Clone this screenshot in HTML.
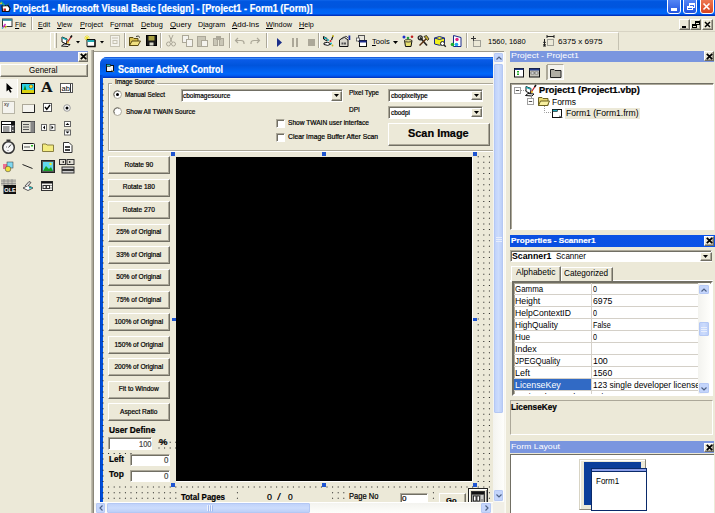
<!DOCTYPE html><html><head><meta charset="utf-8"><style>
html,body{margin:0;padding:0;}
body{width:715px;height:513px;overflow:hidden;position:relative;background:#ECE9D8;font-family:"Liberation Sans",sans-serif;}
div{box-sizing:border-box;-webkit-text-stroke:0.2px currentColor;}
svg{position:absolute;overflow:visible;}
</style></head><body>
<div style="position:absolute;left:0px;top:0px;width:715px;height:16px;background:linear-gradient(#1066EA 0%,#0056E0 10%,#0055DE 45%,#0062F2 60%,#0066F8 86%,#0040D0 93%,#0028B0 100%);"></div>
<div style="position:absolute;left:13px;top:0.50px;height:15px;line-height:15px;font-size:10px;font-weight:bold;color:#fff;white-space:nowrap;transform:scaleX(0.9204);transform-origin:0 0;">Project1 - Microsoft Visual Basic [design] - [Project1 - Form1 (Form)]</div>
<svg style="left:0px;top:1px" width="12" height="12" viewBox="0 0 12 12"><path d="M2 5 L8 4.5 L10 7.5 L9 10.5 L2.5 10.5z" fill="#fff" stroke="#111" stroke-width="1.2"/><path d="M1 0.5 L4.5 4.5" stroke="#1BA890" stroke-width="1.6"/><circle cx="1" cy="2.5" r="1" fill="#E8D020"/><rect x="3.5" y="7.5" width="2.5" height="2.5" fill="#C02020"/><path d="M6 4.5 L9 2.5" stroke="#1a6a80" stroke-width="1.2"/></svg>
<div style="position:absolute;left:667px;top:-3px;width:14px;height:16.5px;background:linear-gradient(#5C8DF8,#2254E0);border:1px solid #fff;border-radius:3px;"></div>
<div style="position:absolute;left:683px;top:-3px;width:14px;height:16.5px;background:linear-gradient(#5C8DF8,#2254E0);border:1px solid #fff;border-radius:3px;"></div>
<div style="position:absolute;left:699.5px;top:-3px;width:14px;height:16.5px;background:linear-gradient(#F0805A,#D9431E);border:1px solid #fff;border-radius:3px;"></div>
<div style="position:absolute;left:671px;top:8px;width:6px;height:2.5px;background:#fff;"></div>
<div style="position:absolute;left:689px;top:3px;width:5.5px;height:4.5px;border:1.2px solid #fff;border-top-width:2px;"></div>
<div style="position:absolute;left:687px;top:5.5px;width:5.5px;height:4.5px;border:1.2px solid #fff;border-top-width:2px;background:#2D63E6;"></div>
<svg style="left:702px;top:2px" width="9" height="9" viewBox="0 0 9 9"><path d="M1.5 1.5 L7.5 7.5 M7.5 1.5 L1.5 7.5" stroke="#fff" stroke-width="1.6"/></svg>
<div style="position:absolute;left:0px;top:16px;width:715px;height:15px;background:#ECE9D8;"></div>
<div style="position:absolute;left:15px;top:19.10px;height:12px;line-height:12px;font-size:7.8px;color:#000;white-space:nowrap;transform:scaleX(0.8753);transform-origin:0 0;-webkit-text-stroke:0;"><u>F</u>ile</div>
<div style="position:absolute;left:37.6px;top:19.10px;height:12px;line-height:12px;font-size:7.8px;color:#000;white-space:nowrap;transform:scaleX(0.9003);transform-origin:0 0;-webkit-text-stroke:0;"><u>E</u>dit</div>
<div style="position:absolute;left:57px;top:19.10px;height:12px;line-height:12px;font-size:7.8px;color:#000;white-space:nowrap;transform:scaleX(0.8947);transform-origin:0 0;-webkit-text-stroke:0;"><u>V</u>iew</div>
<div style="position:absolute;left:80px;top:19.10px;height:12px;line-height:12px;font-size:7.8px;color:#000;white-space:nowrap;transform:scaleX(0.9475);transform-origin:0 0;-webkit-text-stroke:0;"><u>P</u>roject</div>
<div style="position:absolute;left:110.3px;top:19.10px;height:12px;line-height:12px;font-size:7.8px;color:#000;white-space:nowrap;transform:scaleX(0.9514);transform-origin:0 0;-webkit-text-stroke:0;">F<u>o</u>rmat</div>
<div style="position:absolute;left:141.2px;top:19.10px;height:12px;line-height:12px;font-size:7.8px;color:#000;white-space:nowrap;transform:scaleX(0.9485);transform-origin:0 0;-webkit-text-stroke:0;"><u>D</u>ebug</div>
<div style="position:absolute;left:169.7px;top:19.10px;height:12px;line-height:12px;font-size:7.8px;color:#000;white-space:nowrap;transform:scaleX(1.0029);transform-origin:0 0;-webkit-text-stroke:0;"><u>Q</u>uery</div>
<div style="position:absolute;left:197.7px;top:19.10px;height:12px;line-height:12px;font-size:7.8px;color:#000;white-space:nowrap;transform:scaleX(0.9263);transform-origin:0 0;-webkit-text-stroke:0;">D<u>i</u>agram</div>
<div style="position:absolute;left:232px;top:19.10px;height:12px;line-height:12px;font-size:7.8px;color:#000;white-space:nowrap;transform:scaleX(1.0119);transform-origin:0 0;-webkit-text-stroke:0;"><u>A</u>dd-Ins</div>
<div style="position:absolute;left:266.2px;top:19.10px;height:12px;line-height:12px;font-size:7.8px;color:#000;white-space:nowrap;transform:scaleX(0.9372);transform-origin:0 0;-webkit-text-stroke:0;"><u>W</u>indow</div>
<div style="position:absolute;left:299.2px;top:19.10px;height:12px;line-height:12px;font-size:7.8px;color:#000;white-space:nowrap;transform:scaleX(0.9226);transform-origin:0 0;-webkit-text-stroke:0;"><u>H</u>elp</div>
<svg style="left:1px;top:18px" width="12" height="11" viewBox="0 0 12 11"><rect x="1.5" y="1" width="9.5" height="7.5" fill="#fff" stroke="#333"/><rect x="1.5" y="1" width="9.5" height="1.8" fill="#2a8a9a"/><path d="M4.5 6 L2 9.5" stroke="#D030C0" stroke-width="1.5"/><path d="M2 9.5 L1 10.5" stroke="#20B0C0" stroke-width="1.5"/><path d="M4 10 L5.5 8" stroke="#D0C020" stroke-width="1.3"/></svg>
<div style="position:absolute;left:31px;top:17px;width:2px;height:13px;border-left:1px solid #ACA899;border-right:1px solid #fff;"></div>
<div style="position:absolute;left:678.5px;top:19px;width:11px;height:10.5px;background:#ECE9D8;border:1px solid;border-color:#FFFFFF #716F64 #716F64 #FFFFFF;box-shadow:inset -1px -1px #ACA899;"></div>
<div style="position:absolute;left:689.8px;top:19px;width:11px;height:10.5px;background:#ECE9D8;border:1px solid;border-color:#FFFFFF #716F64 #716F64 #FFFFFF;box-shadow:inset -1px -1px #ACA899;"></div>
<div style="position:absolute;left:701.6px;top:19px;width:11px;height:10.5px;background:#ECE9D8;border:1px solid;border-color:#FFFFFF #716F64 #716F64 #FFFFFF;box-shadow:inset -1px -1px #ACA899;"></div>
<div style="position:absolute;left:682px;top:26px;width:4px;height:1.5px;background:#000;"></div>
<div style="position:absolute;left:694.5px;top:21px;width:5px;height:4px;border:1px solid #000;border-top-width:2px;"></div>
<div style="position:absolute;left:692px;top:23.5px;width:5px;height:4px;border:1px solid #000;border-top-width:2px;background:#ECE9D8;"></div>
<svg style="left:704px;top:21px" width="7" height="7" viewBox="0 0 7 7"><path d="M1 1 L6 6 M6 1 L1 6" stroke="#000" stroke-width="1.5"/></svg>
<div style="position:absolute;left:0px;top:31px;width:715px;height:19px;background:#ECE9D8;border-top:1px solid #D8D4C4;"></div>
<div style="position:absolute;left:50px;top:31.8px;width:568.5px;height:18.5px;border-top:1px solid #fff;border-right:1px solid #C5C2B2;border-left:1px solid #fff;"></div>
<div style="position:absolute;left:54px;top:33px;width:3px;height:15px;border-left:1px solid #fff;border-right:1px solid #ACA899;"></div>
<div style="position:absolute;left:124px;top:33px;width:2px;height:15px;border-left:1px solid #ACA899;border-right:1px solid #fff;"></div>
<div style="position:absolute;left:160px;top:33px;width:2px;height:15px;border-left:1px solid #ACA899;border-right:1px solid #fff;"></div>
<div style="position:absolute;left:229px;top:33px;width:2px;height:15px;border-left:1px solid #ACA899;border-right:1px solid #fff;"></div>
<div style="position:absolute;left:265.5px;top:33px;width:2px;height:15px;border-left:1px solid #ACA899;border-right:1px solid #fff;"></div>
<div style="position:absolute;left:318px;top:33px;width:2px;height:15px;border-left:1px solid #ACA899;border-right:1px solid #fff;"></div>
<div style="position:absolute;left:466px;top:33px;width:2px;height:15px;border-left:1px solid #ACA899;border-right:1px solid #fff;"></div>
<svg style="left:61px;top:35px" width="12" height="12" viewBox="0 0 12 12"><path d="M1 2 L6 4 L5.5 9 L1 7z" fill="#fff" stroke="#111"/><path d="M1 2 L6 4 L6 5.5 L1 3.5z" fill="#1BA8B0"/><path d="M0.5 11 L3 9 L9 9.5 L7 11.5z" fill="#fff" stroke="#111"/><path d="M6 8 L10 2" stroke="#C02020" stroke-width="1.3"/><path d="M9.5 2.5 L11 0.5" stroke="#111" stroke-width="1.5"/><circle cx="7" cy="7.5" r="1" fill="#E0C020"/></svg>
<svg style="left:76.2px;top:40.5px" width="4" height="2.5" viewBox="0 0 4 2.5"><path d="M0 0 H4 L2 2.5z" fill="#000"/></svg>
<svg style="left:84px;top:35px" width="12" height="12" viewBox="0 0 12 12"><path d="M3 0 V6 M0 3 H6 M1 1 L5 5 M5 1 L1 5" stroke="#F0E020" stroke-width="0.8"/><path d="M3 4.5 H11 V11.5 H3z" fill="#fff" stroke="#111"/><rect x="3.5" y="5" width="7" height="2" fill="#1BA8B0"/><path d="M11 5 V11.5 H3.5" fill="none" stroke="#111" stroke-width="1.3"/></svg>
<svg style="left:99.5px;top:40.5px" width="4" height="2.5" viewBox="0 0 4 2.5"><path d="M0 0 H4 L2 2.5z" fill="#000"/></svg>
<svg style="left:109.5px;top:35px" width="10" height="12" viewBox="0 0 10 12"><rect x="0.5" y="0.5" width="9" height="11" fill="#F4F3EC" stroke="#C5C2B2"/><rect x="2" y="2.5" width="6" height="1" fill="#C5C2B2"/><rect x="3" y="5.5" width="4" height="3" fill="none" stroke="#C5C2B2"/></svg>
<svg style="left:128.5px;top:35px" width="12" height="11" viewBox="0 0 12 11"><path d="M0.5 2.5 H4 L5 3.5 H9 V10.5 H0.5z" fill="#D8C050" stroke="#5a4a10"/><path d="M0.5 10.5 L3 6 H11.5 L9 10.5z" fill="#F0E080" stroke="#5a4a10"/><path d="M7 1.5 Q9.5 0 11 2.5" stroke="#333" fill="none"/></svg>
<svg style="left:145.5px;top:35px" width="11" height="11" viewBox="0 0 11 11"><rect x="0.5" y="0.5" width="10" height="10" fill="#1a1a1a" stroke="#000"/><rect x="2.5" y="1" width="6" height="4.5" fill="#A8A040"/><rect x="3.5" y="7.5" width="4" height="3" fill="#D8D8C8"/></svg>
<svg style="left:166px;top:35px" width="10" height="12" viewBox="0 0 10 12"><path d="M3 0 L6 7 M7 0 L4 7" stroke="#ACA899"/><circle cx="2.5" cy="9" r="2" fill="none" stroke="#ACA899"/><circle cx="7.5" cy="9" r="2" fill="none" stroke="#ACA899"/></svg>
<svg style="left:181.5px;top:35px" width="11" height="12" viewBox="0 0 11 12"><rect x="0.5" y="0.5" width="6" height="7" fill="#F4F3EE" stroke="#ACA899"/><rect x="4.5" y="4.5" width="6" height="7" fill="#F4F3EE" stroke="#ACA899"/></svg>
<svg style="left:197px;top:35px" width="11" height="12" viewBox="0 0 11 12"><rect x="0.5" y="1.5" width="8" height="10" fill="#C9C6B6" stroke="#ACA899"/><rect x="4.5" y="5.5" width="6" height="6" fill="#F4F3EE" stroke="#ACA899"/></svg>
<svg style="left:213px;top:35px" width="11" height="11" viewBox="0 0 11 11"><rect x="0.5" y="3.5" width="4" height="7" fill="#C9C6B6" stroke="#ACA899"/><rect x="6.5" y="3.5" width="4" height="7" fill="#C9C6B6" stroke="#ACA899"/><rect x="3" y="1" width="5" height="4" fill="#ACA899"/></svg>
<svg style="left:235px;top:37px" width="10" height="8" viewBox="0 0 10 8"><path d="M3 1 L0.5 3.5 L3 6 M1 3.5 H6 Q9 3.5 9 6 V7" fill="none" stroke="#ACA899" stroke-width="1.2"/></svg>
<svg style="left:250px;top:37px" width="10" height="8" viewBox="0 0 10 8"><path d="M7 1 L9.5 3.5 L7 6 M9 3.5 H4 Q1 3.5 1 6 V7" fill="none" stroke="#ACA899" stroke-width="1.2"/></svg>
<svg style="left:277px;top:38px" width="6" height="9" viewBox="0 0 6 9"><path d="M0 0 L5 4.5 L0 9z" fill="#1B2F8A"/></svg>
<svg style="left:292px;top:38px" width="6" height="9" viewBox="0 0 6 9"><rect x="0" y="0" width="2" height="9" fill="#ACA899"/><rect x="4" y="0" width="2" height="9" fill="#ACA899"/></svg>
<svg style="left:307.5px;top:39px" width="7" height="7" viewBox="0 0 7 7"><rect x="0" y="0" width="7" height="7" fill="#ACA899"/></svg>
<svg style="left:323px;top:35px" width="11" height="12" viewBox="0 0 11 12"><path d="M0.5 1.5 L4 3.5 L4 6 L0.5 4z" fill="#fff" stroke="#111"/><rect x="1" y="2.5" width="2.5" height="1.5" fill="#1BB8C0"/><path d="M1 8 Q5 6 8 9 Q5 11.5 1 9.5z" fill="#fff" stroke="#111"/><circle cx="5" cy="5" r="1" fill="#1BB8C0"/><circle cx="7.5" cy="6" r="1" fill="#D02020"/><circle cx="8" cy="8.5" r="1" fill="#1BB8C0"/><path d="M8.5 5 L10 1" stroke="#111" stroke-width="1.2"/><circle cx="10" cy="1" r="1" fill="#C8B820"/><circle cx="9.5" cy="10.5" r="0.9" fill="#C8B820"/></svg>
<svg style="left:339px;top:35px" width="12" height="12" viewBox="0 0 12 12"><path d="M0.5 5 L5 2 L9 5 V11.5 H0.5z" fill="#D8D6CC" stroke="#111"/><path d="M3 4 L7 1 L9 3" fill="none" stroke="#555"/><rect x="2.5" y="7.5" width="2" height="2" fill="#555"/><rect x="5" y="7.5" width="2" height="2" fill="#555"/><rect x="9.5" y="0.5" width="1.8" height="4.5" fill="#1a2a9a"/></svg>
<svg style="left:356px;top:35px" width="11" height="12" viewBox="0 0 11 12"><rect x="2.5" y="0.5" width="6" height="6" fill="#E8E6DC" stroke="#555"/><rect x="0.5" y="3" width="3" height="3" fill="#fff" stroke="#555" stroke-width="0.8"/><rect x="3.5" y="5.5" width="7" height="6" fill="#fff" stroke="#111"/><rect x="3.5" y="5.5" width="7" height="2" fill="#1a2a8a"/></svg>
<div style="position:absolute;left:372.3px;top:35.60px;height:12px;line-height:12px;font-size:7.8px;color:#000;white-space:nowrap;transform:scaleX(0.9721);transform-origin:0 0;-webkit-text-stroke:0;"><u>T</u>ools</div>
<svg style="left:392.5px;top:41px" width="5" height="3" viewBox="0 0 5 3"><path d="M0 0 H5 L2.5 3z" fill="#000"/></svg>
<svg style="left:402px;top:35px" width="12" height="12" viewBox="0 0 12 12"><path d="M2.5 5.5 H10 L9 11.5 H3.5z" fill="#E8E070" stroke="#111"/><ellipse cx="6.2" cy="5.8" rx="3.8" ry="1.2" fill="#F8F0A0" stroke="#111" stroke-width="0.8"/><circle cx="2" cy="2" r="1.5" fill="#2030C8"/><circle cx="6" cy="3" r="1.3" fill="#20A040"/><circle cx="10" cy="1.8" r="1.3" fill="#C02020"/></svg>
<svg style="left:418px;top:35px" width="11" height="12" viewBox="0 0 11 12"><path d="M2 2.5 L9 10.5" stroke="#222" stroke-width="1.6"/><circle cx="2.2" cy="2.8" r="2" fill="none" stroke="#222" stroke-width="1.3"/><path d="M1.5 10.5 L8 4" stroke="#5a3010" stroke-width="1.4"/><path d="M6 1.5 L8.5 0.5 L11 4 L9.5 5.5z" fill="#C8B030" stroke="#222" stroke-width="0.8"/></svg>
<svg style="left:434px;top:35px" width="12" height="12" viewBox="0 0 12 12"><path d="M0.5 3 Q5.5 0 10.5 3 V9 Q5.5 11.5 0.5 9z" fill="#F0F020" stroke="#1a2a8a"/><path d="M0.5 3 Q5.5 6 10.5 3" fill="none" stroke="#1a2a8a"/><circle cx="8.5" cy="8.5" r="2" fill="#fff" stroke="#222"/><path d="M10 10 L11.8 11.8" stroke="#222" stroke-width="1.3"/></svg>
<svg style="left:450px;top:35px" width="12" height="12" viewBox="0 0 12 12"><path d="M3.5 0.5 L11 2.5 V11.5 H3.5z" fill="#fff" stroke="#1a2a8a"/><circle cx="7" cy="4.5" r="1.7" fill="#E02080"/><circle cx="2.5" cy="9.5" r="1.8" fill="#20B030"/><circle cx="6.5" cy="9.5" r="1.8" fill="#20A8F0"/></svg>
<svg style="left:471px;top:36px" width="10" height="11" viewBox="0 0 10 11"><path d="M2.5 0 V5 M0 2.5 H5" stroke="#333"/><path d="M2.5 4.5 V10.5 H9.5 V4.5 H2.5" fill="none" stroke="#555" stroke-dasharray="1 1"/></svg>
<div style="position:absolute;left:487.7px;top:36.30px;height:12px;line-height:12px;font-size:7.8px;color:#000;white-space:nowrap;transform:scaleX(0.9633);transform-origin:0 0;-webkit-text-stroke:0;">1560, 1680</div>
<svg style="left:543px;top:35px" width="11" height="12" viewBox="0 0 11 12"><path d="M4.5 4.5 V10.5 H10.5 V4.5 H4.5" fill="none" stroke="#555" stroke-dasharray="1 1"/><path d="M4 1.5 H11 M4 0 V3 M11 0 V3" stroke="#222"/><path d="M1.5 4 V11 M0 11 H3" stroke="#222"/><path d="M0 8 L1.5 5.5 L3 8z M0 9 L1.5 11.5 L3 9z" fill="#222"/></svg>
<div style="position:absolute;left:557.5px;top:36.30px;height:12px;line-height:12px;font-size:7.8px;color:#000;white-space:nowrap;transform:scaleX(1.0365);transform-origin:0 0;-webkit-text-stroke:0;">6375 x 6975</div>
<div style="position:absolute;left:0px;top:50px;width:91px;height:463px;background:#ECE9D8;"></div>
<div style="position:absolute;left:0px;top:50.6px;width:88px;height:11.6px;background:#7A96DF;"></div>
<div style="position:absolute;left:78px;top:51.6px;width:10px;height:10px;background:#ECE9D8;border:1px solid;border-color:#FFFFFF #716F64 #716F64 #FFFFFF;box-shadow:inset -1px -1px #ACA899;"></div>
<svg style="left:79.5px;top:53px" width="7" height="7" viewBox="0 0 7 7"><path d="M0.8 0.8 L6.2 6.2 M6.2 0.8 L0.8 6.2" stroke="#000" stroke-width="1.8"/></svg>
<div style="position:absolute;left:0px;top:63.7px;width:88.3px;height:13.8px;background:#ECE9D8;border:1px solid;border-color:#FFFFFF #716F64 #716F64 #FFFFFF;box-shadow:inset -1px -1px #ACA899;"></div>
<div style="position:absolute;left:28.6px;top:64.40px;height:13px;line-height:13px;font-size:8.4px;color:#000;white-space:nowrap;transform:scaleX(0.9538);transform-origin:0 0;-webkit-text-stroke:0;">General</div>
<div style="position:absolute;left:91px;top:50px;width:3px;height:463px;border-left:1px solid #C0BDAE;border-right:1px solid #8A877A;background:#ACA899;"></div>
<div style="position:absolute;left:0px;top:79px;width:18px;height:18.5px;background:#F6F5EF;border-right:1px solid #fff;"></div>
<svg style="left:5.5px;top:83px" width="7" height="10" viewBox="0 0 7 10"><path d="M0.5 0 V8.5 L2.5 6.8 L4.2 9.8 L5.6 9 L4 6 H6.8z" fill="#000"/></svg>
<svg style="left:21px;top:82.5px" width="14" height="11" viewBox="0 0 14 11"><rect x="0.5" y="0.5" width="13" height="10" fill="#2BD0E8" stroke="#000"/><circle cx="10" cy="3.5" r="1.8" fill="#FFE020" stroke="#333" stroke-width="0.5"/><path d="M2 9 L4 2 L6 9z" fill="#118811"/><rect x="1" y="7" width="12" height="3" fill="#D8D010"/></svg>
<div style="position:absolute;left:41px;top:80px;font-family:'Liberation Serif',serif;font-size:14px;line-height:16px;font-weight:bold;color:#111;transform:scaleX(1.15);transform-origin:0 0;">A</div>
<svg style="left:60px;top:82.5px" width="13" height="10" viewBox="0 0 13 10"><rect x="0.5" y="0.5" width="12" height="9" fill="#fff" stroke="#555"/><text x="1.5" y="8" font-size="7.5" font-family="Liberation Sans" fill="#000">ab</text><rect x="10" y="1" width="1" height="8" fill="#333"/></svg>
<svg style="left:1.5px;top:101px" width="13" height="13" viewBox="0 0 13 13"><rect x="0.5" y="0.5" width="12" height="12" fill="#F4F3EE" stroke="#B8B5A6"/><text x="2" y="5" font-size="5" font-family="Liberation Sans" fill="#000">xy</text></svg>
<svg style="left:21.5px;top:104px" width="13" height="9" viewBox="0 0 13 9"><rect x="0.5" y="0.5" width="12" height="8" fill="#F4F3EE" stroke="#ACA899"/><path d="M0.5 8.5 H12.5 V0.5" fill="none" stroke="#222"/></svg>
<svg style="left:43px;top:103.3px" width="9" height="9" viewBox="0 0 9 9"><rect x="0.5" y="0.5" width="8" height="8" fill="#fff" stroke="#555"/><path d="M2 4 L3.8 6.3 L7 2" fill="none" stroke="#000" stroke-width="1.4"/></svg>
<svg style="left:63px;top:104px" width="8" height="8" viewBox="0 0 8 8"><circle cx="4" cy="4" r="3.3" fill="#fff" stroke="#999"/><circle cx="4" cy="4" r="1.5" fill="#000"/></svg>
<svg style="left:1px;top:121px" width="14" height="12" viewBox="0 0 14 12"><rect x="0.5" y="0.5" width="13" height="11" fill="#fff" stroke="#111"/><rect x="0.5" y="0.5" width="13" height="3" fill="#fff" stroke="#111"/><rect x="10" y="1" width="3.5" height="2.5" fill="#111"/><rect x="10" y="4" width="3.5" height="7.5" fill="#555"/><path d="M2 6 H8.5 M2 8 H8.5 M2 10 H8.5" stroke="#222" stroke-width="0.9"/><path d="M11 5.5 H12.5 M11 9.5 H12.5" stroke="#fff" stroke-width="0.8"/></svg>
<svg style="left:21px;top:121px" width="14" height="12" viewBox="0 0 14 12"><rect x="0.5" y="0.5" width="13" height="11" fill="#E0DED4" stroke="#333"/><rect x="9.5" y="0.5" width="4" height="11" fill="#888"/><path d="M2 3.5 H8 M2 6 H8 M2 8.5 H8" stroke="#555"/></svg>
<svg style="left:40.5px;top:124px" width="15" height="7" viewBox="0 0 15 7"><rect x="0.5" y="0.5" width="5" height="6" fill="#fff" stroke="#666"/><rect x="9" y="0.5" width="5" height="6" fill="#fff" stroke="#666"/><path d="M4 1.5 L2 3.5 L4 5.5z M10.5 1.5 L12.5 3.5 L10.5 5.5z" fill="#000"/></svg>
<svg style="left:64px;top:120.5px" width="7" height="15" viewBox="0 0 7 15"><rect x="0.5" y="0.5" width="6" height="5" fill="#fff" stroke="#666"/><rect x="0.5" y="9" width="6" height="5" fill="#fff" stroke="#666"/><path d="M1.5 4 L3.5 2 L5.5 4z M1.5 10.5 L3.5 12.5 L5.5 10.5z" fill="#000"/></svg>
<svg style="left:1.5px;top:139px" width="13" height="15" viewBox="0 0 13 15"><circle cx="6.5" cy="8.5" r="5.8" fill="#F6F6F6" stroke="#333" stroke-width="1.5"/><rect x="4.5" y="0.5" width="4" height="2" fill="#333"/><path d="M6.5 8.5 L9 5.5" stroke="#333"/><path d="M4 8 H5 M6 11 V12" stroke="#777"/></svg>
<svg style="left:21.5px;top:143px" width="13" height="8" viewBox="0 0 13 8"><rect x="0.5" y="0.5" width="12" height="7" rx="1" fill="#F6F6F0" stroke="#222"/><path d="M2 4 H8" stroke="#555"/><rect x="9" y="2" width="2" height="1.5" fill="#2b2"/></svg>
<svg style="left:41.5px;top:142px" width="12" height="10" viewBox="0 0 12 10"><path d="M0.5 2 H4 L5 3 H11.5 V9.5 H0.5z" fill="#F4EC80" stroke="#8a8040"/></svg>
<svg style="left:61.5px;top:141.5px" width="11" height="11" viewBox="0 0 11 11"><path d="M1.5 0.5 H7 L10 3.5 V10.5 H1.5z" fill="#fff" stroke="#333"/><rect x="3" y="4" width="5" height="2" fill="#444"/><rect x="3" y="7" width="5" height="2" fill="#444"/></svg>
<svg style="left:3px;top:162px" width="10" height="10" viewBox="0 0 10 10"><rect x="0" y="2" width="5" height="5" fill="#F07090"/><rect x="4" y="0" width="6" height="6" fill="#80D8F0" stroke="#333" stroke-width="0.5"/><circle cx="5" cy="7" r="2.8" fill="#F0E040" stroke="#333" stroke-width="0.5"/></svg>
<svg style="left:22px;top:164px" width="11" height="5" viewBox="0 0 11 5"><path d="M0.5 0.5 L10.5 4.5" stroke="#222"/></svg>
<svg style="left:40.5px;top:160px" width="14" height="13" viewBox="0 0 14 13"><rect x="0.5" y="0.5" width="13" height="12" fill="#555" stroke="#222"/><rect x="2" y="2" width="10" height="9" fill="#60D8F0"/><path d="M2 11 L5 6 L8 9 L10 7 L12 11z" fill="#18A028"/><circle cx="9.5" cy="4" r="1.2" fill="#ee2"/></svg>
<svg style="left:59px;top:159px" width="16" height="15" viewBox="0 0 16 15"><rect x="0.5" y="0.5" width="6" height="5" fill="#E0DED4" stroke="#333"/><rect x="8" y="0.5" width="7" height="5" fill="#E0DED4" stroke="#333"/><rect x="3" y="8" width="12" height="2.5" fill="#ccc" stroke="#333"/><rect x="3" y="11.5" width="12" height="2.5" fill="#ccc" stroke="#333"/><path d="M3 3 L5 2 V4z M10 2 L12 3 L10 4z" fill="#000"/></svg>
<svg style="left:1px;top:178.5px" width="15" height="15" viewBox="0 0 15 15"><rect x="0" y="0" width="15" height="7" fill="#C8C6BA"/><path d="M0 2 H15 M0 4.5 H15 M3 0 V7 M7 0 V7 M11 0 V7" stroke="#888" stroke-width="0.7"/><rect x="2.5" y="6" width="12.5" height="9" fill="#111"/><text x="3.3" y="13" font-size="5.6" font-weight="bold" font-family="Liberation Sans" fill="#fff">OLE</text></svg>
<svg style="left:22px;top:181px" width="12" height="10" viewBox="0 0 12 10"><path d="M1 7 L6 9.5 L11 7 L6 4.5z" fill="#fff" stroke="#555"/><path d="M3 5 L7 0.5 L9 1.5 L6 5" fill="#ddd" stroke="#555"/><rect x="7" y="6" width="3" height="1.5" fill="#2aa"/></svg>
<svg style="left:41px;top:180.5px" width="12" height="10" viewBox="0 0 12 10"><rect x="0.5" y="0.5" width="11" height="9" fill="#F4F3EE" stroke="#333"/><rect x="0.5" y="0.5" width="11" height="2" fill="#111"/><rect x="2" y="4.5" width="3" height="3" fill="none" stroke="#333"/><rect x="5.5" y="4.5" width="3" height="3" fill="none" stroke="#333"/><path d="M10 4 V5 M10 6.5 V7.5" stroke="#333"/></svg>
<div style="position:absolute;left:94px;top:50.5px;width:410px;height:1.5px;background:#9D9A8C;"></div>
<div style="position:absolute;left:94px;top:52px;width:399px;height:451px;background:#fff;"></div>
<div style="position:absolute;left:100px;top:57px;width:393px;height:444.5px;overflow:hidden;">
<div style="position:absolute;left:0px;top:0px;width:420px;height:470px;background:#0A50E6;border-radius:7px 7px 0 0;"></div>
<div style="position:absolute;left:0px;top:0px;width:420px;height:21px;background:linear-gradient(#0A48D0 0%,#3A8CF8 7%,#0A5CE8 13%,#0054DC 40%,#005EEC 60%,#0068FA 80%,#0058EE 90%,#0030B8 100%);border-radius:7px 7px 0 0;"></div>
<div style="position:absolute;left:0px;top:18px;width:3px;height:430px;background:linear-gradient(90deg,#0040C0,#0058EE);"></div>
<svg style="left:5.5px;top:7px" width="9" height="9" viewBox="0 0 9 9"><rect x="0.5" y="1.5" width="7" height="6" fill="#F4F4F4" stroke="#111"/><rect x="0.5" y="0.5" width="4" height="2" fill="#2ec4b6" stroke="#111" stroke-width="0.6"/><path d="M5 6 L8.5 8" stroke="#886" /></svg>
<div style="position:absolute;left:17.6px;top:4.50px;height:15px;line-height:15px;font-size:10px;font-weight:bold;color:#fff;white-space:nowrap;transform:scaleX(0.8975);transform-origin:0 0;">Scanner ActiveX Control</div>
</div>
<div style="position:absolute;left:103px;top:78px;width:390px;height:423.5px;background:#ECE9D8;border-top:1px solid #F6F2DC;"></div>
<div style="position:absolute;left:0;top:0;width:492.6px;height:501.5px;overflow:hidden;">
<svg style="left:0;top:0" width="715" height="513"><path fill="#1a1a1a" d="M102.50 83.40h1v1h-1zM102.50 89.00h1v1h-1zM102.50 94.60h1v1h-1zM102.50 100.20h1v1h-1zM102.50 105.80h1v1h-1zM102.50 111.40h1v1h-1zM102.50 117.00h1v1h-1zM102.50 122.60h1v1h-1zM102.50 128.20h1v1h-1zM102.50 133.80h1v1h-1zM102.50 139.40h1v1h-1zM102.50 145.00h1v1h-1zM102.50 150.60h1v1h-1zM102.50 156.20h1v1h-1zM102.50 161.80h1v1h-1zM102.50 167.40h1v1h-1zM102.50 173.00h1v1h-1zM102.50 178.60h1v1h-1zM102.50 184.20h1v1h-1zM102.50 189.80h1v1h-1zM102.50 195.40h1v1h-1zM102.50 201.00h1v1h-1zM102.50 206.60h1v1h-1zM102.50 212.20h1v1h-1zM102.50 217.80h1v1h-1zM102.50 223.40h1v1h-1zM102.50 229.00h1v1h-1zM102.50 234.60h1v1h-1zM102.50 240.20h1v1h-1zM102.50 245.80h1v1h-1zM102.50 251.40h1v1h-1zM102.50 257.00h1v1h-1zM102.50 262.60h1v1h-1zM102.50 268.20h1v1h-1zM102.50 273.80h1v1h-1zM102.50 279.40h1v1h-1zM102.50 285.00h1v1h-1zM102.50 290.60h1v1h-1zM102.50 296.20h1v1h-1zM102.50 301.80h1v1h-1zM102.50 307.40h1v1h-1zM102.50 313.00h1v1h-1zM102.50 318.60h1v1h-1zM102.50 324.20h1v1h-1zM102.50 329.80h1v1h-1zM102.50 335.40h1v1h-1zM102.50 341.00h1v1h-1zM102.50 346.60h1v1h-1zM102.50 352.20h1v1h-1zM102.50 357.80h1v1h-1zM102.50 363.40h1v1h-1zM102.50 369.00h1v1h-1zM102.50 374.60h1v1h-1zM102.50 380.20h1v1h-1zM102.50 385.80h1v1h-1zM102.50 391.40h1v1h-1zM102.50 397.00h1v1h-1zM102.50 402.60h1v1h-1zM102.50 408.20h1v1h-1zM102.50 413.80h1v1h-1zM102.50 419.40h1v1h-1zM102.50 425.00h1v1h-1zM102.50 430.60h1v1h-1zM102.50 436.20h1v1h-1zM102.50 441.80h1v1h-1zM102.50 447.40h1v1h-1zM102.50 453.00h1v1h-1zM102.50 458.60h1v1h-1zM102.50 464.20h1v1h-1zM102.50 469.80h1v1h-1zM102.50 475.40h1v1h-1zM102.50 481.00h1v1h-1zM102.50 486.60h1v1h-1zM102.50 492.20h1v1h-1zM102.50 497.80h1v1h-1zM477.70 156.20h1v1h-1zM477.70 161.80h1v1h-1zM477.70 167.40h1v1h-1zM477.70 173.00h1v1h-1zM477.70 178.60h1v1h-1zM477.70 184.20h1v1h-1zM477.70 189.80h1v1h-1zM477.70 195.40h1v1h-1zM477.70 201.00h1v1h-1zM477.70 206.60h1v1h-1zM477.70 212.20h1v1h-1zM477.70 217.80h1v1h-1zM477.70 223.40h1v1h-1zM477.70 229.00h1v1h-1zM477.70 234.60h1v1h-1zM477.70 240.20h1v1h-1zM477.70 245.80h1v1h-1zM477.70 251.40h1v1h-1zM477.70 257.00h1v1h-1zM477.70 262.60h1v1h-1zM477.70 268.20h1v1h-1zM477.70 273.80h1v1h-1zM477.70 279.40h1v1h-1zM477.70 285.00h1v1h-1zM477.70 290.60h1v1h-1zM477.70 296.20h1v1h-1zM477.70 301.80h1v1h-1zM477.70 307.40h1v1h-1zM477.70 313.00h1v1h-1zM477.70 318.60h1v1h-1zM477.70 324.20h1v1h-1zM477.70 329.80h1v1h-1zM477.70 335.40h1v1h-1zM477.70 341.00h1v1h-1zM477.70 346.60h1v1h-1zM477.70 352.20h1v1h-1zM477.70 357.80h1v1h-1zM477.70 363.40h1v1h-1zM477.70 369.00h1v1h-1zM477.70 374.60h1v1h-1zM477.70 380.20h1v1h-1zM477.70 385.80h1v1h-1zM477.70 391.40h1v1h-1zM477.70 397.00h1v1h-1zM477.70 402.60h1v1h-1zM477.70 408.20h1v1h-1zM477.70 413.80h1v1h-1zM477.70 419.40h1v1h-1zM477.70 425.00h1v1h-1zM477.70 430.60h1v1h-1zM477.70 436.20h1v1h-1zM477.70 441.80h1v1h-1zM477.70 447.40h1v1h-1zM477.70 453.00h1v1h-1zM477.70 458.60h1v1h-1zM477.70 464.20h1v1h-1zM477.70 469.80h1v1h-1zM477.70 475.40h1v1h-1zM477.70 481.00h1v1h-1zM477.70 486.60h1v1h-1zM477.70 492.20h1v1h-1zM477.70 497.80h1v1h-1zM483.30 156.20h1v1h-1zM483.30 161.80h1v1h-1zM483.30 167.40h1v1h-1zM483.30 173.00h1v1h-1zM483.30 178.60h1v1h-1zM483.30 184.20h1v1h-1zM483.30 189.80h1v1h-1zM483.30 195.40h1v1h-1zM483.30 201.00h1v1h-1zM483.30 206.60h1v1h-1zM483.30 212.20h1v1h-1zM483.30 217.80h1v1h-1zM483.30 223.40h1v1h-1zM483.30 229.00h1v1h-1zM483.30 234.60h1v1h-1zM483.30 240.20h1v1h-1zM483.30 245.80h1v1h-1zM483.30 251.40h1v1h-1zM483.30 257.00h1v1h-1zM483.30 262.60h1v1h-1zM483.30 268.20h1v1h-1zM483.30 273.80h1v1h-1zM483.30 279.40h1v1h-1zM483.30 285.00h1v1h-1zM483.30 290.60h1v1h-1zM483.30 296.20h1v1h-1zM483.30 301.80h1v1h-1zM483.30 307.40h1v1h-1zM483.30 313.00h1v1h-1zM483.30 318.60h1v1h-1zM483.30 324.20h1v1h-1zM483.30 329.80h1v1h-1zM483.30 335.40h1v1h-1zM483.30 341.00h1v1h-1zM483.30 346.60h1v1h-1zM483.30 352.20h1v1h-1zM483.30 357.80h1v1h-1zM483.30 363.40h1v1h-1zM483.30 369.00h1v1h-1zM483.30 374.60h1v1h-1zM483.30 380.20h1v1h-1zM483.30 385.80h1v1h-1zM483.30 391.40h1v1h-1zM483.30 397.00h1v1h-1zM483.30 402.60h1v1h-1zM483.30 408.20h1v1h-1zM483.30 413.80h1v1h-1zM483.30 419.40h1v1h-1zM483.30 425.00h1v1h-1zM483.30 430.60h1v1h-1zM483.30 436.20h1v1h-1zM483.30 441.80h1v1h-1zM483.30 447.40h1v1h-1zM483.30 453.00h1v1h-1zM483.30 458.60h1v1h-1zM483.30 464.20h1v1h-1zM483.30 469.80h1v1h-1zM483.30 475.40h1v1h-1zM483.30 481.00h1v1h-1zM483.30 486.60h1v1h-1zM483.30 492.20h1v1h-1zM483.30 497.80h1v1h-1zM488.90 156.20h1v1h-1zM488.90 161.80h1v1h-1zM488.90 167.40h1v1h-1zM488.90 173.00h1v1h-1zM488.90 178.60h1v1h-1zM488.90 184.20h1v1h-1zM488.90 189.80h1v1h-1zM488.90 195.40h1v1h-1zM488.90 201.00h1v1h-1zM488.90 206.60h1v1h-1zM488.90 212.20h1v1h-1zM488.90 217.80h1v1h-1zM488.90 223.40h1v1h-1zM488.90 229.00h1v1h-1zM488.90 234.60h1v1h-1zM488.90 240.20h1v1h-1zM488.90 245.80h1v1h-1zM488.90 251.40h1v1h-1zM488.90 257.00h1v1h-1zM488.90 262.60h1v1h-1zM488.90 268.20h1v1h-1zM488.90 273.80h1v1h-1zM488.90 279.40h1v1h-1zM488.90 285.00h1v1h-1zM488.90 290.60h1v1h-1zM488.90 296.20h1v1h-1zM488.90 301.80h1v1h-1zM488.90 307.40h1v1h-1zM488.90 313.00h1v1h-1zM488.90 318.60h1v1h-1zM488.90 324.20h1v1h-1zM488.90 329.80h1v1h-1zM488.90 335.40h1v1h-1zM488.90 341.00h1v1h-1zM488.90 346.60h1v1h-1zM488.90 352.20h1v1h-1zM488.90 357.80h1v1h-1zM488.90 363.40h1v1h-1zM488.90 369.00h1v1h-1zM488.90 374.60h1v1h-1zM488.90 380.20h1v1h-1zM488.90 385.80h1v1h-1zM488.90 391.40h1v1h-1zM488.90 397.00h1v1h-1zM488.90 402.60h1v1h-1zM488.90 408.20h1v1h-1zM488.90 413.80h1v1h-1zM488.90 419.40h1v1h-1zM488.90 425.00h1v1h-1zM488.90 430.60h1v1h-1zM488.90 436.20h1v1h-1zM488.90 441.80h1v1h-1zM488.90 447.40h1v1h-1zM488.90 453.00h1v1h-1zM488.90 458.60h1v1h-1zM488.90 464.20h1v1h-1zM488.90 469.80h1v1h-1zM488.90 475.40h1v1h-1zM488.90 481.00h1v1h-1zM488.90 486.60h1v1h-1zM488.90 492.20h1v1h-1zM488.90 497.80h1v1h-1zM108.10 486.60h1v1h-1zM108.10 492.20h1v1h-1zM108.10 497.80h1v1h-1zM113.70 486.60h1v1h-1zM113.70 492.20h1v1h-1zM113.70 497.80h1v1h-1zM119.30 486.60h1v1h-1zM119.30 492.20h1v1h-1zM119.30 497.80h1v1h-1zM124.90 486.60h1v1h-1zM124.90 492.20h1v1h-1zM124.90 497.80h1v1h-1zM130.50 486.60h1v1h-1zM130.50 492.20h1v1h-1zM130.50 497.80h1v1h-1zM136.10 486.60h1v1h-1zM136.10 492.20h1v1h-1zM136.10 497.80h1v1h-1zM141.70 486.60h1v1h-1zM141.70 492.20h1v1h-1zM141.70 497.80h1v1h-1zM147.30 486.60h1v1h-1zM147.30 492.20h1v1h-1zM147.30 497.80h1v1h-1zM152.90 486.60h1v1h-1zM152.90 492.20h1v1h-1zM152.90 497.80h1v1h-1zM158.50 486.60h1v1h-1zM158.50 492.20h1v1h-1zM158.50 497.80h1v1h-1zM164.10 486.60h1v1h-1zM164.10 492.20h1v1h-1zM164.10 497.80h1v1h-1zM169.70 486.60h1v1h-1zM169.70 492.20h1v1h-1zM169.70 497.80h1v1h-1zM175.30 486.60h1v1h-1zM175.30 492.20h1v1h-1zM175.30 497.80h1v1h-1zM180.90 486.60h1v1h-1zM180.90 492.20h1v1h-1zM180.90 497.80h1v1h-1zM186.50 486.60h1v1h-1zM186.50 492.20h1v1h-1zM186.50 497.80h1v1h-1zM192.10 486.60h1v1h-1zM192.10 492.20h1v1h-1zM192.10 497.80h1v1h-1zM197.70 486.60h1v1h-1zM197.70 492.20h1v1h-1zM197.70 497.80h1v1h-1zM203.30 486.60h1v1h-1zM203.30 492.20h1v1h-1zM203.30 497.80h1v1h-1zM208.90 486.60h1v1h-1zM208.90 492.20h1v1h-1zM208.90 497.80h1v1h-1zM214.50 486.60h1v1h-1zM214.50 492.20h1v1h-1zM214.50 497.80h1v1h-1zM220.10 486.60h1v1h-1zM220.10 492.20h1v1h-1zM220.10 497.80h1v1h-1zM225.70 486.60h1v1h-1zM225.70 492.20h1v1h-1zM225.70 497.80h1v1h-1zM231.30 486.60h1v1h-1zM231.30 492.20h1v1h-1zM231.30 497.80h1v1h-1zM236.90 486.60h1v1h-1zM236.90 492.20h1v1h-1zM236.90 497.80h1v1h-1zM242.50 486.60h1v1h-1zM242.50 492.20h1v1h-1zM242.50 497.80h1v1h-1zM248.10 486.60h1v1h-1zM248.10 492.20h1v1h-1zM248.10 497.80h1v1h-1zM253.70 486.60h1v1h-1zM253.70 492.20h1v1h-1zM253.70 497.80h1v1h-1zM259.30 486.60h1v1h-1zM259.30 492.20h1v1h-1zM259.30 497.80h1v1h-1zM264.90 486.60h1v1h-1zM264.90 492.20h1v1h-1zM264.90 497.80h1v1h-1zM270.50 486.60h1v1h-1zM270.50 492.20h1v1h-1zM270.50 497.80h1v1h-1zM276.10 486.60h1v1h-1zM276.10 492.20h1v1h-1zM276.10 497.80h1v1h-1zM281.70 486.60h1v1h-1zM281.70 492.20h1v1h-1zM281.70 497.80h1v1h-1zM287.30 486.60h1v1h-1zM287.30 492.20h1v1h-1zM287.30 497.80h1v1h-1zM292.90 486.60h1v1h-1zM292.90 492.20h1v1h-1zM292.90 497.80h1v1h-1zM298.50 486.60h1v1h-1zM298.50 492.20h1v1h-1zM298.50 497.80h1v1h-1zM304.10 486.60h1v1h-1zM304.10 492.20h1v1h-1zM304.10 497.80h1v1h-1zM309.70 486.60h1v1h-1zM309.70 492.20h1v1h-1zM309.70 497.80h1v1h-1zM315.30 486.60h1v1h-1zM315.30 492.20h1v1h-1zM315.30 497.80h1v1h-1zM320.90 486.60h1v1h-1zM320.90 492.20h1v1h-1zM320.90 497.80h1v1h-1zM326.50 486.60h1v1h-1zM326.50 492.20h1v1h-1zM326.50 497.80h1v1h-1zM332.10 486.60h1v1h-1zM332.10 492.20h1v1h-1zM332.10 497.80h1v1h-1zM337.70 486.60h1v1h-1zM337.70 492.20h1v1h-1zM337.70 497.80h1v1h-1zM343.30 486.60h1v1h-1zM343.30 492.20h1v1h-1zM343.30 497.80h1v1h-1zM348.90 486.60h1v1h-1zM348.90 492.20h1v1h-1zM348.90 497.80h1v1h-1zM354.50 486.60h1v1h-1zM354.50 492.20h1v1h-1zM354.50 497.80h1v1h-1zM360.10 486.60h1v1h-1zM360.10 492.20h1v1h-1zM360.10 497.80h1v1h-1zM365.70 486.60h1v1h-1zM365.70 492.20h1v1h-1zM365.70 497.80h1v1h-1zM371.30 486.60h1v1h-1zM371.30 492.20h1v1h-1zM371.30 497.80h1v1h-1zM376.90 486.60h1v1h-1zM376.90 492.20h1v1h-1zM376.90 497.80h1v1h-1zM382.50 486.60h1v1h-1zM382.50 492.20h1v1h-1zM382.50 497.80h1v1h-1zM388.10 486.60h1v1h-1zM388.10 492.20h1v1h-1zM388.10 497.80h1v1h-1zM393.70 486.60h1v1h-1zM393.70 492.20h1v1h-1zM393.70 497.80h1v1h-1zM399.30 486.60h1v1h-1zM399.30 492.20h1v1h-1zM399.30 497.80h1v1h-1zM404.90 486.60h1v1h-1zM404.90 492.20h1v1h-1zM404.90 497.80h1v1h-1zM410.50 486.60h1v1h-1zM410.50 492.20h1v1h-1zM410.50 497.80h1v1h-1zM416.10 486.60h1v1h-1zM416.10 492.20h1v1h-1zM416.10 497.80h1v1h-1zM421.70 486.60h1v1h-1zM421.70 492.20h1v1h-1zM421.70 497.80h1v1h-1zM427.30 486.60h1v1h-1zM427.30 492.20h1v1h-1zM427.30 497.80h1v1h-1zM432.90 486.60h1v1h-1zM432.90 492.20h1v1h-1zM432.90 497.80h1v1h-1zM438.50 486.60h1v1h-1zM438.50 492.20h1v1h-1zM438.50 497.80h1v1h-1zM444.10 486.60h1v1h-1zM444.10 492.20h1v1h-1zM444.10 497.80h1v1h-1zM449.70 486.60h1v1h-1zM449.70 492.20h1v1h-1zM449.70 497.80h1v1h-1zM455.30 486.60h1v1h-1zM455.30 492.20h1v1h-1zM455.30 497.80h1v1h-1zM460.90 486.60h1v1h-1zM460.90 492.20h1v1h-1zM460.90 497.80h1v1h-1zM466.50 486.60h1v1h-1zM466.50 492.20h1v1h-1zM466.50 497.80h1v1h-1zM472.10 486.60h1v1h-1zM472.10 492.20h1v1h-1zM472.10 497.80h1v1h-1zM108.10 453.00h1v1h-1zM113.70 453.00h1v1h-1zM119.30 453.00h1v1h-1zM124.90 453.00h1v1h-1zM130.50 453.00h1v1h-1zM158.50 441.80h1v1h-1zM158.50 447.40h1v1h-1zM164.10 441.80h1v1h-1zM164.10 447.40h1v1h-1zM169.70 441.80h1v1h-1zM169.70 447.40h1v1h-1zM175.30 441.80h1v1h-1zM175.30 447.40h1v1h-1z"/></svg>
<div style="position:absolute;left:108px;top:82.5px;width:400px;height:68px;border:1px solid #ACA899;box-shadow:inset 1px 1px #fff, 1px 1px #fff;background:#ECE9D8;"></div>
<div style="position:absolute;left:112px;top:78px;width:45px;height:8px;background:#ECE9D8;"></div>
<div style="position:absolute;left:114.5px;top:77.30px;height:10px;line-height:10px;font-size:6.6px;color:#000;white-space:nowrap;transform:scaleX(0.9614);transform-origin:0 0;">Image Source</div>
<svg style="left:113.4px;top:90.1px" width="9" height="9" viewBox="0 0 9 9"><circle cx="4.5" cy="4.5" r="4" fill="#fff" stroke="#ACA899"/><path d="M1.6 6.5 A3.5 3.5 0 0 1 6.5 1.6" fill="none" stroke="#716F64"/><circle cx="4.5" cy="4.5" r="1.5" fill="#000"/></svg>
<div style="position:absolute;left:125px;top:89.50px;height:10px;line-height:10px;font-size:6.6px;color:#000;white-space:nowrap;transform:scaleX(0.9565);transform-origin:0 0;">Manual Select</div>
<svg style="left:113.4px;top:106.9px" width="9" height="9" viewBox="0 0 9 9"><circle cx="4.5" cy="4.5" r="4" fill="#fff" stroke="#ACA899"/><path d="M1.6 6.5 A3.5 3.5 0 0 1 6.5 1.6" fill="none" stroke="#716F64"/></svg>
<div style="position:absolute;left:125.7px;top:106.50px;height:10px;line-height:10px;font-size:6.6px;color:#000;white-space:nowrap;transform:scaleX(0.9789);transform-origin:0 0;">Show All TWAIN Source</div>
<div style="position:absolute;left:180.7px;top:88.8px;width:162.3px;height:13.700000000000003px;background:#FFFFFF;border:1px solid;border-color:#ACA899 #FFFFFF #FFFFFF #ACA899;box-shadow:inset 1px 1px #716F64;"></div>
<div style="position:absolute;left:330.7px;top:90.6px;width:11px;height:10.100000000000003px;background:#ECE9D8;border:1px solid;border-color:#FFFFFF #716F64 #716F64 #FFFFFF;box-shadow:inset -1px -1px #ACA899;"></div>
<svg style="left:333.7px;top:94.15px" width="5" height="3" viewBox="0 0 5 3"><path d="M0 0 H5 L2.5 3z" fill="#000"/></svg>
<div style="position:absolute;left:183.2px;top:90.95px;height:10px;line-height:10px;font-size:6.6px;color:#000;white-space:nowrap;transform:scaleX(0.9789);transform-origin:0 0;">cboimagesource</div>
<div style="position:absolute;left:349px;top:88.20px;height:10px;line-height:10px;font-size:6.6px;color:#000;white-space:nowrap;transform:scaleX(0.9892);transform-origin:0 0;">Pixel Type</div>
<div style="position:absolute;left:349px;top:105.00px;height:10px;line-height:10px;font-size:6.6px;color:#000;white-space:nowrap;transform:scaleX(0.9816);transform-origin:0 0;">DPI</div>
<div style="position:absolute;left:388px;top:89px;width:94.80000000000001px;height:12.799999999999997px;background:#FFFFFF;border:1px solid;border-color:#ACA899 #FFFFFF #FFFFFF #ACA899;box-shadow:inset 1px 1px #716F64;"></div>
<div style="position:absolute;left:470.5px;top:90.8px;width:11px;height:9.199999999999998px;background:#ECE9D8;border:1px solid;border-color:#FFFFFF #716F64 #716F64 #FFFFFF;box-shadow:inset -1px -1px #ACA899;"></div>
<svg style="left:473.5px;top:93.9px" width="5" height="3" viewBox="0 0 5 3"><path d="M0 0 H5 L2.5 3z" fill="#000"/></svg>
<div style="position:absolute;left:390.5px;top:90.70px;height:10px;line-height:10px;font-size:6.6px;color:#000;white-space:nowrap;transform:scaleX(1.0031);transform-origin:0 0;">cbopixeltype</div>
<div style="position:absolute;left:388px;top:106.2px;width:94.80000000000001px;height:12.799999999999997px;background:#FFFFFF;border:1px solid;border-color:#ACA899 #FFFFFF #FFFFFF #ACA899;box-shadow:inset 1px 1px #716F64;"></div>
<div style="position:absolute;left:470.5px;top:108.0px;width:11px;height:9.199999999999998px;background:#ECE9D8;border:1px solid;border-color:#FFFFFF #716F64 #716F64 #FFFFFF;box-shadow:inset -1px -1px #ACA899;"></div>
<svg style="left:473.5px;top:111.1px" width="5" height="3" viewBox="0 0 5 3"><path d="M0 0 H5 L2.5 3z" fill="#000"/></svg>
<div style="position:absolute;left:390.5px;top:107.90px;height:10px;line-height:10px;font-size:6.6px;color:#000;white-space:nowrap;transform:scaleX(0.9719);transform-origin:0 0;">cbodpi</div>
<div style="position:absolute;left:275.9px;top:118.9px;width:9px;height:9px;background:#FFFFFF;border:1px solid;border-color:#ACA899 #FFFFFF #FFFFFF #ACA899;box-shadow:inset 1px 1px #716F64;"></div>
<div style="position:absolute;left:288px;top:118.00px;height:10px;line-height:10px;font-size:6.6px;color:#000;white-space:nowrap;transform:scaleX(0.9993);transform-origin:0 0;">Show TWAIN user interface</div>
<div style="position:absolute;left:275.9px;top:132.7px;width:9px;height:9px;background:#FFFFFF;border:1px solid;border-color:#ACA899 #FFFFFF #FFFFFF #ACA899;box-shadow:inset 1px 1px #716F64;"></div>
<div style="position:absolute;left:288px;top:131.80px;height:10px;line-height:10px;font-size:6.6px;color:#000;white-space:nowrap;transform:scaleX(1.0303);transform-origin:0 0;">Clear Image Buffer After Scan</div>
<div style="position:absolute;left:388px;top:122.5px;width:102px;height:23.5px;background:#ECE9D8;border:1px solid;border-color:#FFFFFF #716F64 #716F64 #FFFFFF;box-shadow:inset -1px -1px #ACA899;"></div>
<div style="position:absolute;left:408.2px;top:124.70px;height:17px;line-height:17px;font-size:11.3px;font-weight:bold;color:#000;white-space:nowrap;transform:scaleX(0.9665);transform-origin:0 0;">Scan Image</div>
<div style="position:absolute;left:107.8px;top:156.3px;width:62px;height:17.9px;background:#ECE9D8;border:1px solid;border-color:#FFFFFF #716F64 #716F64 #FFFFFF;box-shadow:inset -1px -1px #ACA899;"></div>
<div style="position:absolute;left:124.49089062500002px;top:159.90px;height:10px;line-height:10px;font-size:6.6px;color:#000;white-space:nowrap;">Rotate 90</div>
<div style="position:absolute;left:107.8px;top:178.75px;width:62px;height:17.9px;background:#ECE9D8;border:1px solid;border-color:#FFFFFF #716F64 #716F64 #FFFFFF;box-shadow:inset -1px -1px #ACA899;"></div>
<div style="position:absolute;left:122.65578125000002px;top:182.35px;height:10px;line-height:10px;font-size:6.6px;color:#000;white-space:nowrap;">Rotate 180</div>
<div style="position:absolute;left:107.8px;top:201.20000000000002px;width:62px;height:17.9px;background:#ECE9D8;border:1px solid;border-color:#FFFFFF #716F64 #716F64 #FFFFFF;box-shadow:inset -1px -1px #ACA899;"></div>
<div style="position:absolute;left:122.65578125000002px;top:204.80px;height:10px;line-height:10px;font-size:6.6px;color:#000;white-space:nowrap;">Rotate 270</div>
<div style="position:absolute;left:107.8px;top:223.65px;width:62px;height:17.9px;background:#ECE9D8;border:1px solid;border-color:#FFFFFF #716F64 #716F64 #FFFFFF;box-shadow:inset -1px -1px #ACA899;"></div>
<div style="position:absolute;left:116.23934375000002px;top:227.25px;height:10px;line-height:10px;font-size:6.6px;color:#000;white-space:nowrap;">25% of Original</div>
<div style="position:absolute;left:107.8px;top:246.10000000000002px;width:62px;height:17.9px;background:#ECE9D8;border:1px solid;border-color:#FFFFFF #716F64 #716F64 #FFFFFF;box-shadow:inset -1px -1px #ACA899;"></div>
<div style="position:absolute;left:116.23934375000002px;top:249.70px;height:10px;line-height:10px;font-size:6.6px;color:#000;white-space:nowrap;">33% of Original</div>
<div style="position:absolute;left:107.8px;top:268.55px;width:62px;height:17.9px;background:#ECE9D8;border:1px solid;border-color:#FFFFFF #716F64 #716F64 #FFFFFF;box-shadow:inset -1px -1px #ACA899;"></div>
<div style="position:absolute;left:116.23934375000002px;top:272.15px;height:10px;line-height:10px;font-size:6.6px;color:#000;white-space:nowrap;">50% of Original</div>
<div style="position:absolute;left:107.8px;top:291.0px;width:62px;height:17.9px;background:#ECE9D8;border:1px solid;border-color:#FFFFFF #716F64 #716F64 #FFFFFF;box-shadow:inset -1px -1px #ACA899;"></div>
<div style="position:absolute;left:116.23934375000002px;top:294.60px;height:10px;line-height:10px;font-size:6.6px;color:#000;white-space:nowrap;">75% of Original</div>
<div style="position:absolute;left:107.8px;top:313.45000000000005px;width:62px;height:17.9px;background:#ECE9D8;border:1px solid;border-color:#FFFFFF #716F64 #716F64 #FFFFFF;box-shadow:inset -1px -1px #ACA899;"></div>
<div style="position:absolute;left:114.40423437500002px;top:317.05px;height:10px;line-height:10px;font-size:6.6px;color:#000;white-space:nowrap;">100% of Original</div>
<div style="position:absolute;left:107.8px;top:335.9px;width:62px;height:17.9px;background:#ECE9D8;border:1px solid;border-color:#FFFFFF #716F64 #716F64 #FFFFFF;box-shadow:inset -1px -1px #ACA899;"></div>
<div style="position:absolute;left:114.40423437500002px;top:339.50px;height:10px;line-height:10px;font-size:6.6px;color:#000;white-space:nowrap;">150% of Original</div>
<div style="position:absolute;left:107.8px;top:358.35px;width:62px;height:17.9px;background:#ECE9D8;border:1px solid;border-color:#FFFFFF #716F64 #716F64 #FFFFFF;box-shadow:inset -1px -1px #ACA899;"></div>
<div style="position:absolute;left:114.40423437500002px;top:361.95px;height:10px;line-height:10px;font-size:6.6px;color:#000;white-space:nowrap;">200% of Original</div>
<div style="position:absolute;left:107.8px;top:380.8px;width:62px;height:17.9px;background:#ECE9D8;border:1px solid;border-color:#FFFFFF #716F64 #716F64 #FFFFFF;box-shadow:inset -1px -1px #ACA899;"></div>
<div style="position:absolute;left:118.81231250000002px;top:384.40px;height:10px;line-height:10px;font-size:6.6px;color:#000;white-space:nowrap;">Fit to Window</div>
<div style="position:absolute;left:107.8px;top:403.25px;width:62px;height:17.9px;background:#ECE9D8;border:1px solid;border-color:#FFFFFF #716F64 #716F64 #FFFFFF;box-shadow:inset -1px -1px #ACA899;"></div>
<div style="position:absolute;left:120.09157812500001px;top:406.85px;height:10px;line-height:10px;font-size:6.6px;color:#000;white-space:nowrap;">Aspect Ratio</div>
<div style="position:absolute;left:176px;top:157.4px;width:297px;height:125px;background:#000;border-right:1.3px solid #fff;border-bottom:1.2px solid #fff;height:325px;"></div>
<div style="position:absolute;left:171px;top:152px;width:4px;height:3.8px;background:#1F55D0;"></div>
<div style="position:absolute;left:322px;top:152px;width:4px;height:3.8px;background:#1F55D0;"></div>
<div style="position:absolute;left:473.2px;top:152px;width:4px;height:3.8px;background:#1F55D0;"></div>
<div style="position:absolute;left:171.5px;top:317.6px;width:4px;height:3.8px;background:#1F55D0;"></div>
<div style="position:absolute;left:473.2px;top:317.6px;width:4px;height:3.8px;background:#1F55D0;"></div>
<div style="position:absolute;left:171px;top:482.8px;width:4px;height:3.8px;background:#1F55D0;"></div>
<div style="position:absolute;left:322px;top:482.8px;width:4px;height:3.8px;background:#1F55D0;"></div>
<div style="position:absolute;left:473.2px;top:482.8px;width:4px;height:3.8px;background:#1F55D0;"></div>
<div style="position:absolute;left:108.6px;top:424.60px;height:12px;line-height:12px;font-size:8.2px;font-weight:bold;color:#000;white-space:nowrap;transform:scaleX(1.0182);transform-origin:0 0;">User Define</div>
<div style="position:absolute;left:108.2px;top:437.1px;width:44.2px;height:12.5px;background:#FFFFFF;border:1px solid;border-color:#ACA899 #FFFFFF #FFFFFF #ACA899;box-shadow:inset 1px 1px #716F64;"></div>
<div style="position:absolute;left:139.3px;top:436.50px;height:14px;line-height:14px;font-size:9px;color:#444;white-space:nowrap;transform:scaleX(0.8325);transform-origin:0 0;">100</div>
<div style="position:absolute;left:158.8px;top:435.30px;height:14px;line-height:14px;font-size:9px;font-weight:bold;color:#000;white-space:nowrap;transform:scaleX(1.0621);transform-origin:0 0;">%</div>
<div style="position:absolute;left:108.6px;top:454.20px;height:12px;line-height:12px;font-size:8.2px;font-weight:bold;color:#000;white-space:nowrap;transform:scaleX(0.9981);transform-origin:0 0;">Left</div>
<div style="position:absolute;left:130.4px;top:453.7px;width:39.5px;height:12.1px;background:#FFFFFF;border:1px solid;border-color:#ACA899 #FFFFFF #FFFFFF #ACA899;box-shadow:inset 1px 1px #716F64;"></div>
<div style="position:absolute;left:163.9px;top:453.90px;height:13px;line-height:13px;font-size:8.6px;color:#444;white-space:nowrap;transform:scaleX(0.9200);transform-origin:0 0;">0</div>
<div style="position:absolute;left:108.8px;top:469.40px;height:12px;line-height:12px;font-size:8.2px;font-weight:bold;color:#000;white-space:nowrap;transform:scaleX(1.0266);transform-origin:0 0;">Top</div>
<div style="position:absolute;left:130.4px;top:470.4px;width:39.5px;height:12.1px;background:#FFFFFF;border:1px solid;border-color:#ACA899 #FFFFFF #FFFFFF #ACA899;box-shadow:inset 1px 1px #716F64;"></div>
<div style="position:absolute;left:163.9px;top:470.30px;height:13px;line-height:13px;font-size:8.6px;color:#444;white-space:nowrap;transform:scaleX(0.9200);transform-origin:0 0;">0</div>
<div style="position:absolute;left:177.5px;top:489.5px;width:58.5px;height:12px;background:#ECE9D8;"></div>
<div style="position:absolute;left:239.5px;top:489.5px;width:91.5px;height:12px;background:#ECE9D8;"></div>
<div style="position:absolute;left:347px;top:489.5px;width:50px;height:12px;background:#ECE9D8;"></div>
<div style="position:absolute;left:399px;top:489.5px;width:33px;height:12px;background:#ECE9D8;"></div>
<div style="position:absolute;left:436px;top:489.5px;width:50px;height:12px;background:#ECE9D8;"></div>
<div style="position:absolute;left:180.7px;top:491.50px;height:12px;line-height:12px;font-size:8.2px;font-weight:bold;color:#000;white-space:nowrap;transform:scaleX(0.9711);transform-origin:0 0;">Total Pages</div>
<div style="position:absolute;left:267.3px;top:490.80px;height:13px;line-height:13px;font-size:8.4px;color:#000;white-space:nowrap;transform:scaleX(1.0704);transform-origin:0 0;">0</div>
<div style="position:absolute;left:277px;top:490.80px;height:13px;line-height:13px;font-size:8.4px;color:#000;white-space:nowrap;transform:scaleX(1.7141);transform-origin:0 0;-webkit-text-stroke:0;">/</div>
<div style="position:absolute;left:287.8px;top:490.80px;height:13px;line-height:13px;font-size:8.4px;color:#000;white-space:nowrap;transform:scaleX(1.0062);transform-origin:0 0;">0</div>
<div style="position:absolute;left:349px;top:491.00px;height:12px;line-height:12px;font-size:8.2px;color:#000;white-space:nowrap;transform:scaleX(0.9214);transform-origin:0 0;">Page No</div>
<div style="position:absolute;left:399.7px;top:492.5px;width:28px;height:14px;background:#FFFFFF;border:1px solid;border-color:#ACA899 #FFFFFF #FFFFFF #ACA899;box-shadow:inset 1px 1px #716F64;"></div>
<div style="position:absolute;left:402px;top:493.00px;height:12px;line-height:12px;font-size:8px;color:#000;white-space:nowrap;transform:scaleX(1.0115);transform-origin:0 0;">0</div>
<div style="position:absolute;left:438.5px;top:492.6px;width:27.5px;height:16px;background:#ECE9D8;border:1px solid;border-color:#FFFFFF #716F64 #716F64 #FFFFFF;box-shadow:inset -1px -1px #ACA899;"></div>
<div style="position:absolute;left:446px;top:495.30px;height:11px;line-height:11px;font-size:7.6px;font-weight:bold;color:#000;white-space:nowrap;">Go</div>
<div style="position:absolute;left:467.7px;top:487.6px;width:20px;height:16px;background:#ECE9D8;border:1px solid #222;box-shadow:inset 1px 1px #fff, inset -1px -1px #888;"></div>
<svg style="left:470.5px;top:490.5px" width="14" height="11" viewBox="0 0 14 11"><rect x="0.5" y="0.5" width="13" height="11" fill="#9A9A96" stroke="#333"/><rect x="1" y="1" width="12" height="2.5" fill="#111"/><rect x="2.5" y="5" width="2.5" height="5" fill="#fff" stroke="#111" stroke-width="0.8"/><rect x="6" y="5" width="2.5" height="5" fill="#fff" stroke="#111" stroke-width="0.8"/><path d="M10 5 H12 M10 7 H12" stroke="#fff"/></svg>
</div>
<div style="position:absolute;left:492.6px;top:52px;width:11.4px;height:451px;background:linear-gradient(90deg,#F3F3EF,#FEFEFB);"></div>
<div style="position:absolute;left:493.6px;top:53px;width:9.6px;height:9px;background:#C4D5FB;border:1px solid #B6C9F5;border-radius:1px;"></div>
<svg style="left:495.5px;top:55.5px" width="6" height="4" viewBox="0 0 6 4"><path d="M0.5 3.5 L3 1 L5.5 3.5" fill="none" stroke="#4D6185" stroke-width="1.15"/></svg>
<div style="position:absolute;left:493.6px;top:63.8px;width:9.6px;height:349.5px;background:linear-gradient(90deg,#C0D2FA,#CCDCFC 50%,#BCCFF8);border:1px solid #B4C8F4;border-radius:1px;"></div>
<svg style="left:495.5px;top:236.5px" width="6" height="5" viewBox="0 0 6 5"><path d="M0 0.5 H6 M0 2.5 H6 M0 4.5 H6" stroke="#E8EEFC"/></svg>
<div style="position:absolute;left:493.6px;top:490px;width:9.6px;height:11px;background:#C4D5FB;border:1px solid #B6C9F5;border-radius:1px;"></div>
<svg style="left:495.5px;top:494px" width="6" height="4" viewBox="0 0 6 4"><path d="M0.5 0.5 L3 3 L5.5 0.5" fill="none" stroke="#4D6185" stroke-width="1.15"/></svg>
<div style="position:absolute;left:94px;top:502.6px;width:399px;height:10.4px;background:linear-gradient(#F3F3EF,#FEFEFB);"></div>
<div style="position:absolute;left:95.5px;top:503px;width:9.5px;height:10px;background:#C4D5FB;border:1px solid #B6C9F5;border-radius:1px;"></div>
<svg style="left:98.5px;top:505px" width="4" height="6" viewBox="0 0 4 6"><path d="M3.5 0.5 L1 3 L3.5 5.5" fill="none" stroke="#4D6185" stroke-width="1.15"/></svg>
<div style="position:absolute;left:107px;top:503px;width:203px;height:10px;background:linear-gradient(#C0D2FA,#CCDCFC 50%,#BCCFF8);border:1px solid #B4C8F4;border-radius:1px;"></div>
<svg style="left:206.5px;top:505px" width="6" height="6" viewBox="0 0 6 6"><path d="M0.5 0 V6 M2.5 0 V6 M4.5 0 V6" stroke="#EEF3FE"/><path d="M1.5 0.5 V6.5 M3.5 0.5 V6.5 M5.5 0.5 V6.5" stroke="#8CA8E8" stroke-width="0.6"/></svg>
<div style="position:absolute;left:481px;top:503px;width:10px;height:10px;background:#C4D5FB;border:1px solid #B6C9F5;border-radius:1px;"></div>
<svg style="left:484.5px;top:505px" width="4" height="6" viewBox="0 0 4 6"><path d="M0.5 0.5 L3 3 L0.5 5.5" fill="none" stroke="#4D6185" stroke-width="1.15"/></svg>
<div style="position:absolute;left:492.6px;top:502px;width:12px;height:11px;background:#F1EFE6;"></div>
<div style="position:absolute;left:503.5px;top:52px;width:2.5px;height:461px;background:linear-gradient(90deg,#F4F3EC,#FDFCF6);"></div>
<div style="position:absolute;left:506px;top:50px;width:209px;height:463px;background:#ECE9D8;"></div>
<div style="position:absolute;left:510px;top:50.6px;width:204px;height:11.6px;background:#7A96DF;"></div>
<div style="position:absolute;left:511px;top:50.30px;height:12px;line-height:12px;font-size:8px;color:#fff;white-space:nowrap;transform:scaleX(1.1083);transform-origin:0 0;-webkit-text-stroke:0;">Project - Project1</div>
<div style="position:absolute;left:704px;top:51.3px;width:10px;height:10px;background:#ECE9D8;border:1px solid;border-color:#FFFFFF #716F64 #716F64 #FFFFFF;box-shadow:inset -1px -1px #ACA899;"></div>
<svg style="left:705.5px;top:53px" width="7" height="7" viewBox="0 0 7 7"><path d="M0.8 0.8 L6.2 6.2 M6.2 0.8 L0.8 6.2" stroke="#000" stroke-width="1.8"/></svg>
<svg style="left:514px;top:67.5px" width="10" height="9.5" viewBox="0 0 10 9.5"><rect x="0.5" y="0.5" width="9" height="8.5" fill="#fff" stroke="#111"/><rect x="0.5" y="0.5" width="9" height="1.5" fill="#223a8a"/><rect x="3" y="3" width="2" height="1.5" fill="#2a2"/><rect x="3" y="5.5" width="2" height="1.5" fill="#2a2"/></svg>
<svg style="left:529px;top:67.5px" width="11" height="9.5" viewBox="0 0 11 9.5"><rect x="0.5" y="0.5" width="10" height="8.5" fill="#C8C6BC" stroke="#111"/><rect x="0.5" y="0.5" width="10" height="2" fill="#223a8a"/><rect x="2" y="4" width="3" height="2" fill="#fff" stroke="#333" stroke-width="0.5"/><rect x="6" y="4" width="3" height="2" fill="#fff" stroke="#333" stroke-width="0.5"/></svg>
<div style="position:absolute;left:545.7px;top:64.5px;width:2px;height:15px;border-left:1px solid #ACA899;border-right:1px solid #fff;"></div>
<div style="position:absolute;left:547px;top:64.4px;width:16.8px;height:15.2px;background:#F4F3EC;border:1px solid;border-color:#ACA899 #fff #fff #ACA899;"></div>
<svg style="left:549.5px;top:67.5px" width="12" height="10" viewBox="0 0 12 10"><path d="M0.5 1.5 H4 L5 2.5 H11 V9.5 H0.5z" fill="#B0AEA4" stroke="#222"/></svg>
<div style="position:absolute;left:510px;top:82.6px;width:204px;height:147px;background:#fff;border:1px solid;border-color:#716F64 #fff #fff #716F64;box-shadow:inset 1px 1px #ACA899;"></div>
<svg style="left:513.8px;top:86.8px" width="7" height="7" viewBox="0 0 7 7"><rect x="0.5" y="0.5" width="6" height="6" fill="#fff" stroke="#A0A0A0"/><path d="M1.8 3.5 H5.2" stroke="#444" stroke-width="0.9"/></svg>
<svg style="left:520.5px;top:90px" width="5" height="1" viewBox="0 0 5 1"><path d="M0 0.5 H5" stroke="#999" stroke-dasharray="1 1"/></svg>
<svg style="left:525px;top:84.5px" width="12" height="11" viewBox="0 0 12 11"><path d="M1 1.5 L6 3.5 L5.5 8.5 L1 6.5z" fill="#fff" stroke="#111"/><path d="M1 1.5 L6 3.5 L6 5 L1 3z" fill="#1BA8B0"/><path d="M0.5 10.5 L3 8.5 L9 9 L7 11z" fill="#fff" stroke="#111"/><path d="M6 7.5 L10 1.5" stroke="#C02020" stroke-width="1.3"/><path d="M9.5 2 L11 0" stroke="#111" stroke-width="1.5"/><circle cx="7" cy="7" r="1" fill="#E0C020"/></svg>
<div style="position:absolute;left:539px;top:85.00px;height:12px;line-height:12px;font-size:8.2px;font-weight:bold;color:#000;white-space:nowrap;transform:scaleX(1.1309);transform-origin:0 0;">Project1 (Project1.vbp)</div>
<svg style="left:527.3px;top:98px" width="7" height="7" viewBox="0 0 7 7"><rect x="0.5" y="0.5" width="6" height="6" fill="#fff" stroke="#A0A0A0"/><path d="M1.8 3.5 H5.2" stroke="#444" stroke-width="0.9"/></svg>
<svg style="left:531px;top:95px" width="1" height="3" viewBox="0 0 1 3"><path d="M0.5 0 V3" stroke="#999" stroke-dasharray="1 1"/></svg>
<svg style="left:538px;top:96px" width="12" height="10" viewBox="0 0 12 10"><path d="M0.5 1.5 H4 L5 2.5 H10 V9.5 H0.5z" fill="#E8D870" stroke="#6a6020"/><path d="M0.5 9.5 L2.5 5 H11.5 L9.5 9.5z" fill="#F8F0A0" stroke="#6a6020"/></svg>
<div style="position:absolute;left:551.5px;top:95.70px;height:13px;line-height:13px;font-size:8.4px;color:#000;white-space:nowrap;transform:scaleX(1.0086);transform-origin:0 0;-webkit-text-stroke:0;">Forms</div>
<svg style="left:544px;top:106px" width="8" height="7" viewBox="0 0 8 7"><path d="M0.5 0 V6.5 H8" stroke="#999" stroke-dasharray="1 1" fill="none"/></svg>
<svg style="left:552px;top:107.5px" width="12" height="10" viewBox="0 0 12 10"><rect x="0.5" y="1.5" width="9" height="8" fill="#fff" stroke="#111"/><rect x="0.5" y="1.5" width="5" height="2" fill="#2ab" stroke="#111" stroke-width="0.6"/><path d="M7 8 L10.5 9.5" stroke="#666"/></svg>
<div style="position:absolute;left:564.5px;top:107.5px;width:75px;height:11.5px;background:#ECE9D8;"></div>
<div style="position:absolute;left:565.8px;top:106.80px;height:13px;line-height:13px;font-size:8.4px;color:#000;white-space:nowrap;transform:scaleX(1.0251);transform-origin:0 0;-webkit-text-stroke:0;">Form1 (Form1.frm)</div>
<div style="position:absolute;left:510.4px;top:234.9px;width:303.6px;height:12px;background:linear-gradient(90deg,#0A4FE0,#0B55EC);"></div>
<div style="position:absolute;left:511.2px;top:234.60px;height:12px;line-height:12px;font-size:8px;font-weight:bold;color:#fff;white-space:nowrap;transform:scaleX(1.0230);transform-origin:0 0;">Properties - Scanner1</div>
<div style="position:absolute;left:704px;top:236px;width:9.5px;height:9.5px;background:#ECE9D8;border:1px solid;border-color:#FFFFFF #716F64 #716F64 #FFFFFF;box-shadow:inset -1px -1px #ACA899;"></div>
<svg style="left:705.5px;top:237.3px" width="7" height="7" viewBox="0 0 7 7"><path d="M0.8 0.8 L6.2 6.2 M6.2 0.8 L0.8 6.2" stroke="#000" stroke-width="1.8"/></svg>
<div style="position:absolute;left:510.4px;top:250.3px;width:202px;height:12px;background:#FFFFFF;border:1px solid;border-color:#ACA899 #FFFFFF #FFFFFF #ACA899;box-shadow:inset 1px 1px #716F64;"></div>
<div style="position:absolute;left:700px;top:252px;width:11.5px;height:8.5px;background:#ECE9D8;border:1px solid;border-color:#FFFFFF #716F64 #716F64 #FFFFFF;box-shadow:inset -1px -1px #ACA899;"></div>
<svg style="left:703px;top:255px" width="5" height="3" viewBox="0 0 5 3"><path d="M0 0 H5 L2.5 3z" fill="#000"/></svg>
<div style="position:absolute;left:512px;top:250.40px;height:13px;line-height:13px;font-size:8.8px;font-weight:bold;color:#000;white-space:nowrap;transform:scaleX(0.9970);transform-origin:0 0;-webkit-text-stroke:0;">Scanner1</div>
<div style="position:absolute;left:555.8px;top:250.40px;height:13px;line-height:13px;font-size:8.8px;color:#000;white-space:nowrap;transform:scaleX(0.9153);transform-origin:0 0;-webkit-text-stroke:0;">Scanner</div>
<div style="position:absolute;left:510.4px;top:280px;width:203px;height:2px;background:#fff;"></div>
<div style="position:absolute;left:560.7px;top:267.2px;width:52px;height:13.5px;background:#ECE9D8;border:1px solid;border-bottom:none;border-color:#fff #716F64 #fff #fff;box-shadow:inset -1px 0 #ACA899;"></div>
<div style="position:absolute;left:511px;top:265.7px;width:49.7px;height:15.5px;background:#ECE9D8;border:1px solid;border-bottom:none;border-color:#fff #716F64 #fff #fff;box-shadow:inset -1px 0 #ACA899;"></div>
<div style="position:absolute;left:515.5px;top:266.10px;height:13px;line-height:13px;font-size:8.4px;color:#000;white-space:nowrap;transform:scaleX(1.0070);transform-origin:0 0;-webkit-text-stroke:0;">Alphabetic</div>
<div style="position:absolute;left:563.5px;top:267.20px;height:13px;line-height:13px;font-size:8.4px;color:#000;white-space:nowrap;transform:scaleX(0.9781);transform-origin:0 0;-webkit-text-stroke:0;">Categorized</div>
<div style="position:absolute;left:512px;top:281px;width:201px;height:115px;background:#fff;border:2px solid;border-color:#716F64 #fff #fff #716F64;box-shadow:1px 1px #ACA899 inset;"></div>
<div style="position:absolute;left:0;top:0;width:698px;height:393.5px;overflow:hidden;">
<div style="position:absolute;left:515px;top:284.00px;height:12px;line-height:12px;font-size:8.2px;color:#000;white-space:nowrap;transform:scaleX(0.9671);transform-origin:0 0;-webkit-text-stroke:0;">Gamma</div>
<div style="position:absolute;left:593px;top:284.00px;height:12px;line-height:12px;font-size:8.2px;color:#000;white-space:nowrap;transform:scaleX(0.8772);transform-origin:0 0;-webkit-text-stroke:0;">0</div>
<div style="position:absolute;left:514px;top:294.0px;width:184px;height:1px;background:#D4D0C8;"></div>
<div style="position:absolute;left:515px;top:295.95px;height:12px;line-height:12px;font-size:8.2px;color:#000;white-space:nowrap;transform:scaleX(1.0632);transform-origin:0 0;-webkit-text-stroke:0;">Height</div>
<div style="position:absolute;left:593px;top:295.95px;height:12px;line-height:12px;font-size:8.2px;color:#000;white-space:nowrap;transform:scaleX(1.0581);transform-origin:0 0;-webkit-text-stroke:0;">6975</div>
<div style="position:absolute;left:514px;top:305.95px;width:184px;height:1px;background:#D4D0C8;"></div>
<div style="position:absolute;left:515px;top:307.90px;height:12px;line-height:12px;font-size:8.2px;color:#000;white-space:nowrap;transform:scaleX(1.0502);transform-origin:0 0;-webkit-text-stroke:0;">HelpContextID</div>
<div style="position:absolute;left:593px;top:307.90px;height:12px;line-height:12px;font-size:8.2px;color:#000;white-space:nowrap;transform:scaleX(0.8772);transform-origin:0 0;-webkit-text-stroke:0;">0</div>
<div style="position:absolute;left:514px;top:317.9px;width:184px;height:1px;background:#D4D0C8;"></div>
<div style="position:absolute;left:515px;top:319.85px;height:12px;line-height:12px;font-size:8.2px;color:#000;white-space:nowrap;transform:scaleX(1.0122);transform-origin:0 0;-webkit-text-stroke:0;">HighQuality</div>
<div style="position:absolute;left:593px;top:319.85px;height:12px;line-height:12px;font-size:8.2px;color:#000;white-space:nowrap;transform:scaleX(0.8828);transform-origin:0 0;-webkit-text-stroke:0;">False</div>
<div style="position:absolute;left:514px;top:329.85px;width:184px;height:1px;background:#D4D0C8;"></div>
<div style="position:absolute;left:515px;top:331.80px;height:12px;line-height:12px;font-size:8.2px;color:#000;white-space:nowrap;transform:scaleX(0.9972);transform-origin:0 0;-webkit-text-stroke:0;">Hue</div>
<div style="position:absolute;left:593px;top:331.80px;height:12px;line-height:12px;font-size:8.2px;color:#000;white-space:nowrap;transform:scaleX(0.8772);transform-origin:0 0;-webkit-text-stroke:0;">0</div>
<div style="position:absolute;left:514px;top:341.8px;width:184px;height:1px;background:#D4D0C8;"></div>
<div style="position:absolute;left:515px;top:343.75px;height:12px;line-height:12px;font-size:8.2px;color:#000;white-space:nowrap;transform:scaleX(1.0819);transform-origin:0 0;-webkit-text-stroke:0;">Index</div>
<div style="position:absolute;left:514px;top:353.75px;width:184px;height:1px;background:#D4D0C8;"></div>
<div style="position:absolute;left:515px;top:355.70px;height:12px;line-height:12px;font-size:8.2px;color:#000;white-space:nowrap;transform:scaleX(0.9630);transform-origin:0 0;-webkit-text-stroke:0;">JPEGQuality</div>
<div style="position:absolute;left:593px;top:355.70px;height:12px;line-height:12px;font-size:8.2px;color:#000;white-space:nowrap;transform:scaleX(1.0819);transform-origin:0 0;-webkit-text-stroke:0;">100</div>
<div style="position:absolute;left:514px;top:365.7px;width:184px;height:1px;background:#D4D0C8;"></div>
<div style="position:absolute;left:515px;top:367.65px;height:12px;line-height:12px;font-size:8.2px;color:#000;white-space:nowrap;transform:scaleX(1.0968);transform-origin:0 0;-webkit-text-stroke:0;">Left</div>
<div style="position:absolute;left:593px;top:367.65px;height:12px;line-height:12px;font-size:8.2px;color:#000;white-space:nowrap;transform:scaleX(1.0526);transform-origin:0 0;-webkit-text-stroke:0;">1560</div>
<div style="position:absolute;left:514px;top:377.65px;width:184px;height:1px;background:#D4D0C8;"></div>
<div style="position:absolute;left:514px;top:378.6px;width:77px;height:11.5px;background:#316AC5;"></div>
<div style="position:absolute;left:515px;top:379.60px;height:12px;line-height:12px;font-size:8.2px;color:#fff;white-space:nowrap;transform:scaleX(1.0804);transform-origin:0 0;-webkit-text-stroke:0;">LicenseKey</div>
<div style="position:absolute;left:593px;top:379.60px;height:12px;line-height:12px;font-size:8.2px;color:#000;white-space:nowrap;transform:scaleX(1.0341);transform-origin:0 0;-webkit-text-stroke:0;">123 single developer license</div>
<div style="position:absolute;left:514px;top:389.6px;width:184px;height:1px;background:#D4D0C8;"></div>
<div style="position:absolute;left:515px;top:391.55px;height:12px;line-height:12px;font-size:8.2px;color:#000;white-space:nowrap;transform:scaleX(1.0334);transform-origin:0 0;-webkit-text-stroke:0;">OptionalBarCode</div>
<div style="position:absolute;left:593px;top:391.55px;height:12px;line-height:12px;font-size:8.2px;color:#000;white-space:nowrap;transform:scaleX(0.8828);transform-origin:0 0;-webkit-text-stroke:0;">False</div>
<div style="position:absolute;left:514px;top:401.55px;width:184px;height:1px;background:#D4D0C8;"></div>
<div style="position:absolute;left:591px;top:283px;width:1px;height:120px;background:#D4D0C8;"></div>
</div>
<div style="position:absolute;left:698px;top:283px;width:12px;height:111px;background:linear-gradient(90deg,#F3F3EF,#FEFEFB);"></div>
<div style="position:absolute;left:698.5px;top:284.7px;width:10.5px;height:9.8px;background:#C4D5FB;border:1px solid #B6C9F5;border-radius:1px;"></div>
<svg style="left:701px;top:288px" width="6" height="4" viewBox="0 0 6 4"><path d="M0.5 3.5 L3 1 L5.5 3.5" fill="none" stroke="#4D6185" stroke-width="1.15"/></svg>
<div style="position:absolute;left:698.5px;top:321.6px;width:10.5px;height:14.1px;background:linear-gradient(90deg,#C0D2FA,#CCDCFC 50%,#BCCFF8);border:1px solid #B4C8F4;border-radius:1px;"></div>
<svg style="left:701px;top:326.5px" width="6" height="5" viewBox="0 0 6 5"><path d="M0 0.5 H6 M0 2.5 H6 M0 4.5 H6" stroke="#E8EEFC"/></svg>
<div style="position:absolute;left:698.5px;top:383px;width:10.5px;height:9.8px;background:#C4D5FB;border:1px solid #B6C9F5;border-radius:1px;"></div>
<svg style="left:701px;top:386.5px" width="6" height="4" viewBox="0 0 6 4"><path d="M0.5 0.5 L3 3 L5.5 0.5" fill="none" stroke="#4D6185" stroke-width="1.15"/></svg>
<div style="position:absolute;left:510px;top:400px;width:203px;height:35px;border:1px solid;border-color:#ACA899 #fff #fff #ACA899;"></div>
<div style="position:absolute;left:511px;top:402.20px;height:12px;line-height:12px;font-size:8.2px;font-weight:bold;color:#000;white-space:nowrap;transform:scaleX(1.0093);transform-origin:0 0;">LicenseKey</div>
<div style="position:absolute;left:510.2px;top:441.2px;width:203.8px;height:11.4px;background:#7A96DF;"></div>
<div style="position:absolute;left:511px;top:440.80px;height:12px;line-height:12px;font-size:8px;color:#fff;white-space:nowrap;transform:scaleX(1.0913);transform-origin:0 0;-webkit-text-stroke:0;">Form Layout</div>
<div style="position:absolute;left:704px;top:442.5px;width:9.5px;height:9.5px;background:#ECE9D8;border:1px solid;border-color:#FFFFFF #716F64 #716F64 #FFFFFF;box-shadow:inset -1px -1px #ACA899;"></div>
<svg style="left:705.5px;top:443.8px" width="7" height="7" viewBox="0 0 7 7"><path d="M0.8 0.8 L6.2 6.2 M6.2 0.8 L0.8 6.2" stroke="#000" stroke-width="1.8"/></svg>
<div style="position:absolute;left:510px;top:454px;width:204px;height:59px;background:#fff;border-left:1px solid #716F64;border-top:1px solid #716F64;"></div>
<div style="position:absolute;left:579px;top:459px;width:67px;height:50.5px;background:#ECE9D8;border:1px solid;border-color:#D8D4C4 #8A877A #8A877A #D8D4C4;box-shadow:inset 1px 1px #fff;"></div>
<div style="position:absolute;left:583.9px;top:462.3px;width:56.8px;height:43px;background:#0B3E9A;"></div>
<div style="position:absolute;left:590.8px;top:467.6px;width:56.7px;height:43.2px;background:#fff;border:1.5px solid #0A2A6A;"></div>
<div style="position:absolute;left:592.3px;top:469.1px;width:53.7px;height:3px;background:#8A9EE8;border-bottom:1px solid #0A2A6A;"></div>
<div style="position:absolute;left:595.8px;top:475.20px;height:13px;line-height:13px;font-size:8.4px;color:#000;white-space:nowrap;transform:scaleX(0.9560);transform-origin:0 0;-webkit-text-stroke:0;">Form1</div>
</body></html>
